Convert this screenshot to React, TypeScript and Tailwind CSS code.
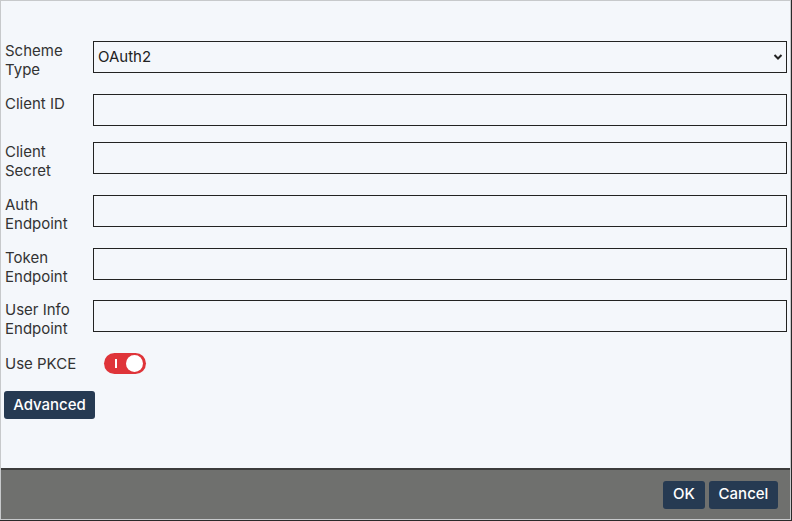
import React from "react";

const Field = ({ label, mb }: { label: React.ReactNode; mb: string }) => (
  <div className={`flex items-start ${mb}`}>
    <label className="w-[89px] shrink-0 pl-[1px] text-[15px] leading-[19px] text-[#333]">{label}</label>
    <input className="h-[32px] flex-1 border border-[#222] bg-[#f4f7fb] px-1 outline-none" />
  </div>
);

export default function App() {
  return (
    <div className="h-[521px] w-[792px] bg-[#2a2a2a] font-['Inter','Liberation_Sans',sans-serif]">
      <div className="flex h-[520px] w-[791px] flex-col border border-[#c7c9cb] bg-[#f4f7fb]">
        <div className="flex-1 pl-[3px] pr-[3px] pt-[40px]">
          <div className="mb-[15px] flex items-start">
            <label className="w-[89px] shrink-0 pl-[1px] text-[15px] leading-[19px] text-[#333]">
              Scheme
              <br />
              Type
            </label>
            <div className="relative flex h-[32px] flex-1 items-center border border-[#222] bg-[#f4f7fb] pl-[4px] text-[15px] text-[#222]">
              OAuth2
              <svg className="absolute right-[3px] top-[11px]" width="10" height="8" viewBox="0 0 10 8">
                <path d="M1.5 2 L5 5.5 L8.5 2" fill="none" stroke="#222" strokeWidth="2" />
              </svg>
            </div>
          </div>
          <Field label="Client ID" mb="mb-[16px]" />
          <Field label={<>Client<br />Secret</>} mb="mb-[15px]" />
          <Field label={<>Auth<br />Endpoint</>} mb="mb-[15px]" />
          <Field label={<>Token<br />Endpoint</>} mb="mb-[14px]" />
          <Field label={<>User Info<br />Endpoint</>} mb="mb-[15px]" />
          <div className="flex items-center">
            <span className="w-[100px] shrink-0 pl-[1px] text-[15px] leading-[19px] text-[#333]">Use PKCE</span>
            <div className="relative h-[21px] w-[42px] rounded-full bg-[#df3439]">
              <span className="absolute left-[11px] top-[6px] h-[9px] w-[2px] bg-white" />
              <span className="absolute right-[3px] top-[2px] h-[17px] w-[17px] rounded-full bg-white" />
            </div>
          </div>
          <button className="mt-[17px] h-[28px] w-[91px] rounded-[3px] bg-[#263a52] text-[15px] font-medium text-white">
            Advanced
          </button>
        </div>
        <div className="flex h-[51px] items-center justify-end gap-[4px] border-t-2 border-[#3c3c3c] bg-[#6f706e] pr-[12px]">
          <button className="h-[28px] w-[42px] rounded-[3px] bg-[#263a52] text-[15px] font-medium text-white">OK</button>
          <button className="h-[28px] w-[69px] rounded-[3px] bg-[#263a52] text-[15px] font-medium text-white">Cancel</button>
        </div>
      </div>
    </div>
  );
}
